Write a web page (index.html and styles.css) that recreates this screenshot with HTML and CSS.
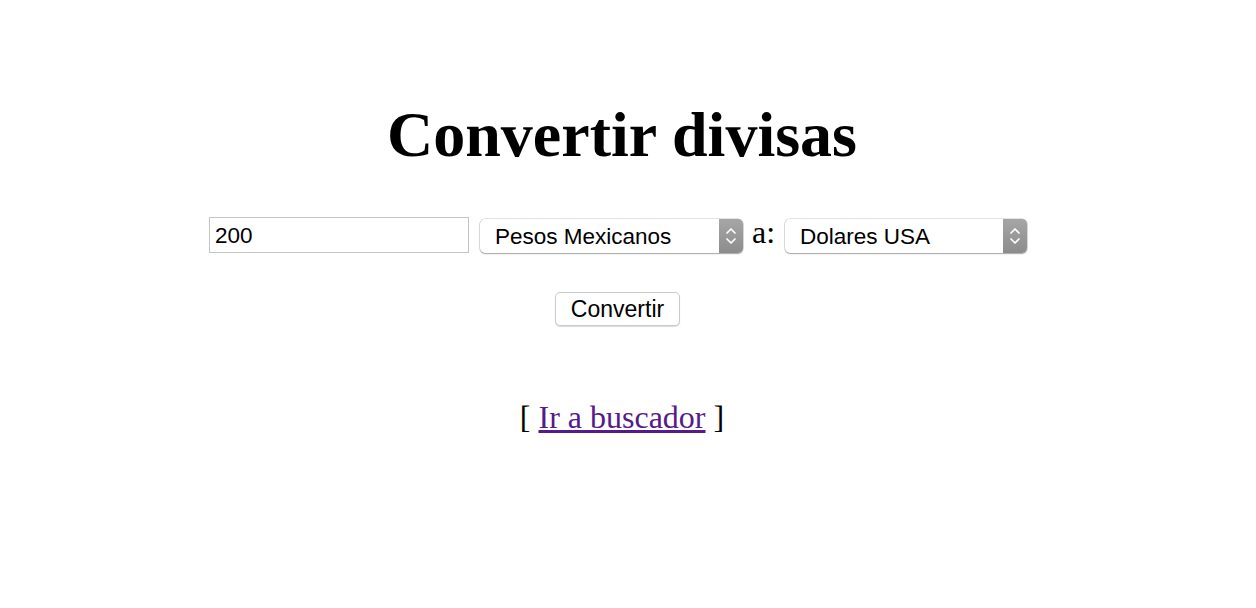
FILE: index.html
```html
<!DOCTYPE html>
<html lang="es">
<head>
<meta charset="utf-8">
<title>Convertir divisas</title>
<link rel="stylesheet" href="styles.css">
</head>
<body>
<div class="page">
  <h1 class="title">Convertir divisas</h1>
  <form class="form">
    <div class="row">
      <input class="amount" type="text" value="200">
      <span class="select sel-from">
        <select class="select-native"><option>Pesos Mexicanos</option></select>
        <span class="select-arrow"><svg width="12" height="20" viewBox="0 0 12 20"><path d="M2 7 L6 3 L10 7 M2 13 L6 17 L10 13" fill="none" stroke="#fff" stroke-width="1.7" stroke-linecap="round" stroke-linejoin="round"/></svg></span>
      </span>
      <span class="label">a:</span>
      <span class="select sel-to">
        <select class="select-native"><option>Dolares USA</option></select>
        <span class="select-arrow"><svg width="12" height="20" viewBox="0 0 12 20"><path d="M2 7 L6 3 L10 7 M2 13 L6 17 L10 13" fill="none" stroke="#fff" stroke-width="1.7" stroke-linecap="round" stroke-linejoin="round"/></svg></span>
      </span>
    </div>
    <div class="actions">
      <button class="btn" type="button">Convertir</button>
    </div>
  </form>
  <p class="nav">[ <a class="link" href="#">Ir a buscador</a> ]</p>
</div>
</body>
</html>
```

FILE: styles.css
```css
html, body {
  margin: 0;
  padding: 0;
  background: #fff;
}

.page {
  width: 1244px;
  text-align: center;
  font-family: "Liberation Serif", "Times New Roman", serif;
  color: #000;
}

.title {
  margin: 99px 0 0;
  font-size: 64px;
  line-height: 72px;
  font-weight: bold;
}

.form {
  margin: 0;
}

.row {
  margin-top: 45px;
  display: flex;
  justify-content: center;
  align-items: flex-end;
  padding-right: 8px;
}

.amount {
  box-sizing: border-box;
  width: 260px;
  height: 36px;
  margin: 0;
  border: 1px solid #c4c4c4;
  border-radius: 0;
  padding: 2px 0 0 5px;
  font-family: "Liberation Sans", Arial, sans-serif;
  font-size: 22.5px;
  color: #000;
  outline: none;
}

.select {
  box-sizing: border-box;
  display: flex;
  height: 34px;
  border-radius: 5px;
  background: #fff;
  box-shadow: 0 0 0 0.5px rgba(0, 0, 0, 0.22), 0 1px 1.5px rgba(0, 0, 0, 0.28);
  overflow: hidden;
}

.sel-from {
  width: 263px;
  margin-left: 11px;
}

.sel-to {
  width: 242px;
  margin-left: 10px;
}

.select-native {
  appearance: none;
  -webkit-appearance: none;
  flex: 1;
  min-width: 0;
  border: none;
  background: transparent;
  margin: 0;
  padding: 0 0 0 15px;
  font-family: "Liberation Sans", Arial, sans-serif;
  font-size: 22.5px;
  color: #000;
  outline: none;
}

.select-arrow {
  width: 24px;
  flex: none;
  display: flex;
  align-items: center;
  justify-content: center;
  background: linear-gradient(#a6a6a6, #8c8c8c);
}

.label {
  margin-left: 9px;
  font-size: 32px;
  line-height: 32px;
  padding-bottom: 5px;
}

.actions {
  margin-top: 39px;
  display: flex;
  justify-content: center;
  padding-right: 9px;
}

.btn {
  box-sizing: border-box;
  width: 125px;
  height: 34px;
  margin: 0;
  padding: 0;
  border: 1px solid #cbcbcb;
  border-radius: 5px;
  background: #fff;
  box-shadow: 0 1px 1px rgba(0, 0, 0, 0.15);
  font-family: "Liberation Sans", Arial, sans-serif;
  font-size: 23px;
  color: #000;
}

.nav {
  margin: 73px 0 0;
  font-size: 32px;
  line-height: 36px;
}

.link {
  color: #551a8b;
}
```
